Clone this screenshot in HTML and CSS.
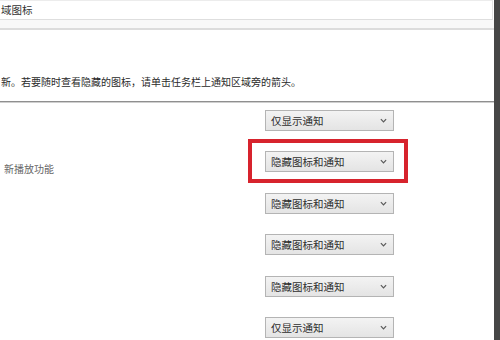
FILE: index.html
```html
<!DOCTYPE html>
<html lang="zh-CN">
<head>
  <meta charset="UTF-8" />
  <title>通知区域图标</title>
  <link rel="stylesheet" href="styles.css">
</head>
<body>
  <div class="panel">
    <!-- Barre de recherche / titre -->
    <div class="field"><span>域图标</span></div>
    <div class="band"></div>

    <p class="hint">新。若要随时查看隐藏的图标，请单击任务栏上通知区域旁的箭头。</p>
    <div class="divider"></div>

    <!-- Liste des icônes -->
    <div class="rows">
      <div class="row">
        <div class="label"></div>
        <div class="select"><span>仅显示通知</span><svg viewBox="0 0 8 5"><path d="M1 1l3 3 3-3" /></svg></div>
      </div>
      <div class="row">
        <div class="label"><span>新播放功能</span></div>
        <div class="select marked"><span>隐藏图标和通知</span><svg viewBox="0 0 8 5"><path d="M1 1l3 3 3-3" /></svg></div>
      </div>
      <div class="row">
        <div class="label"></div>
        <div class="select"><span>隐藏图标和通知</span><svg viewBox="0 0 8 5"><path d="M1 1l3 3 3-3" /></svg></div>
      </div>
      <div class="row">
        <div class="label"></div>
        <div class="select"><span>隐藏图标和通知</span><svg viewBox="0 0 8 5"><path d="M1 1l3 3 3-3" /></svg></div>
      </div>
      <div class="row">
        <div class="label"></div>
        <div class="select"><span>隐藏图标和通知</span><svg viewBox="0 0 8 5"><path d="M1 1l3 3 3-3" /></svg></div>
      </div>
      <div class="row">
        <div class="label"></div>
        <div class="select"><span>仅显示通知</span><svg viewBox="0 0 8 5"><path d="M1 1l3 3 3-3" /></svg></div>
      </div>
    </div>
  </div>

  <div class="scrollbar"></div>
</body>
</html>
```

FILE: styles.css
```css
* {
  margin: 0;
  padding: 0;
  box-sizing: border-box;
  font-family: 'Noto Sans CJK SC', 'Noto Sans', sans-serif;
}

body {
  display: flex;
  width: 500px;
  height: 340px;
  background-color: #fff;
  overflow: hidden;
}

.panel {
  flex: 1;
  display: flex;
  flex-direction: column;
  overflow: hidden;
}

.field {
  height: 20px;
  margin-right: 1px;
  padding-left: 1px;
  border-top: 1px solid #ececec;
  border-bottom: 1px solid #dedede;
  border-right: 1px solid #e4e4e4;
  font-size: 10.5px;
  line-height: 18px;
  color: #333;
  white-space: nowrap;
}

.band {
  height: 10px;
  background-color: #f8f8f8;
  border-bottom: 2px solid #dcdcdc;
}

.hint {
  margin-top: 45px;
  padding-left: 1px;
  font-size: 10px;
  line-height: 14px;
  color: #2a2a2a;
  white-space: nowrap;
}

.divider {
  margin-top: 12px;
  height: 2px;
  border-top: 1px solid #8f8f8f;
  border-bottom: 1px solid #cfcfcf;
}

.rows {
  display: flex;
  flex-direction: column;
  gap: 20.4px;
  padding-top: 7px;
}

.row {
  display: flex;
  height: 21px;
}

.label {
  width: 265px;
  padding-top: 11px;
  padding-left: 4px;
  font-size: 10px;
  line-height: 14px;
  color: #666;
  white-space: nowrap;
}

.select {
  position: relative;
  width: 129px;
  height: 21px;
  display: flex;
  align-items: center;
  justify-content: space-between;
  padding: 0 5px 0 5px;
  border: 1px solid #b4b4b4;
  background: linear-gradient(#f3f3f3, #e4e4e4);
  font-size: 10.5px;
  color: #2e2e2e;
}

.select svg {
  width: 7px;
  height: 5px;
  margin-right: 1px;
  fill: none;
  stroke: #5a5a5a;
  stroke-width: 1.4;
}

/* cadre rouge de mise en évidence */
.select.marked::after {
  content: '';
  position: absolute;
  top: -13px;
  left: -18px;
  right: -15px;
  bottom: -12px;
  border: 4px solid #d7232d;
}

.scrollbar {
  width: 6px;
  background-color: #464646;
}
```
